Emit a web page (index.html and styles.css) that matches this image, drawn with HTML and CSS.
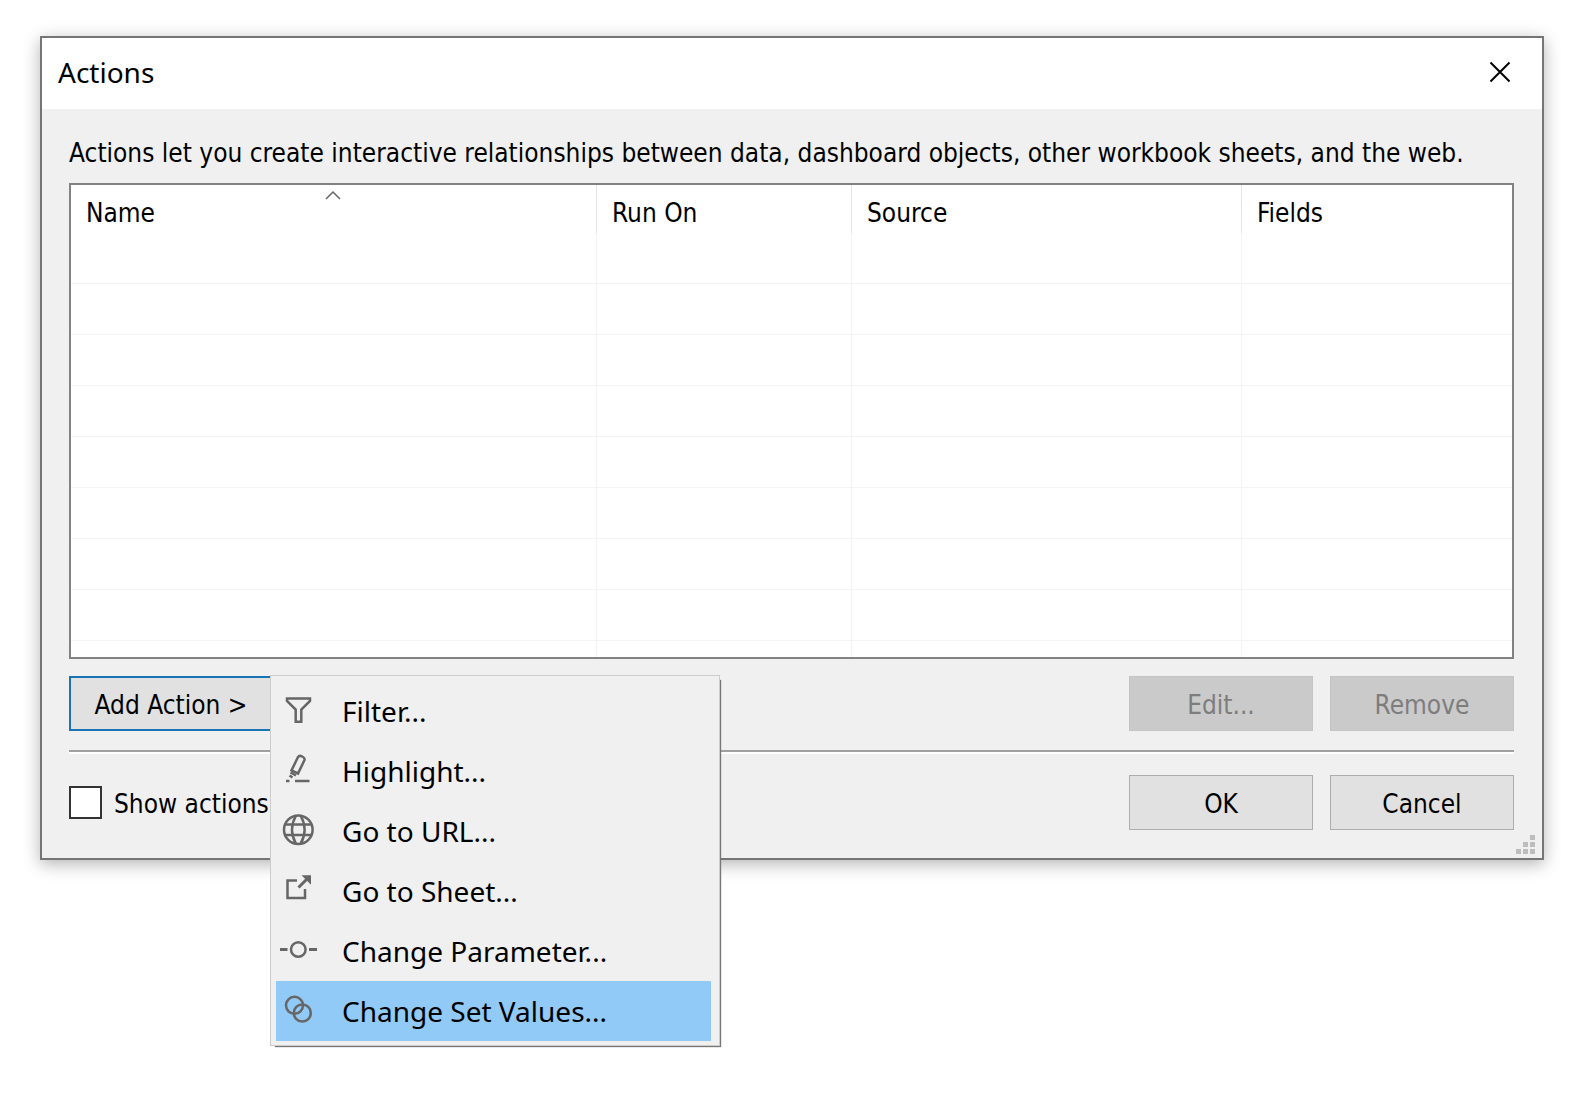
FILE: index.html
```html
<!DOCTYPE html>
<html lang="en">
<head>
    <meta charset="UTF-8">
    <meta name="viewport" content="width=device-width, initial-scale=1.0">
    <title>Actions</title>
    <link rel="stylesheet" href="styles.css">
</head>
<body>
    <div class="dialog" role="dialog" aria-labelledby="dialog-title">
        <div class="title-bar">
            <h1 id="dialog-title">Actions</h1>
            <button class="close-button" aria-label="Close">
                <svg width="22" height="22" viewBox="0 0 22 22"><path d="M1.5 1.5 20.5 20.5M20.5 1.5 1.5 20.5"/></svg>
            </button>
        </div>

        <div class="dialog-body">
            <p class="intro">Actions let you create interactive relationships between data, dashboard objects, other workbook sheets, and the web.</p>

            <table class="action-list">
                <colgroup>
                    <col class="col-name">
                    <col class="col-run">
                    <col class="col-source">
                    <col>
                </colgroup>
                <thead>
                    <tr>
                        <th class="sorted">Name
                            <svg class="sort-icon" width="18" height="10" viewBox="0 0 18 10"><path d="M2 9 9 2l7 7"/></svg>
                        </th>
                        <th>Run On</th>
                        <th>Source</th>
                        <th>Fields</th>
                    </tr>
                </thead>
                <tbody>
                    <tr><td></td><td></td><td></td><td></td></tr>
                    <tr><td></td><td></td><td></td><td></td></tr>
                    <tr><td></td><td></td><td></td><td></td></tr>
                    <tr><td></td><td></td><td></td><td></td></tr>
                    <tr><td></td><td></td><td></td><td></td></tr>
                    <tr><td></td><td></td><td></td><td></td></tr>
                    <tr><td></td><td></td><td></td><td></td></tr>
                    <tr><td></td><td></td><td></td><td></td></tr>
                    <tr class="last-row"><td></td><td></td><td></td><td></td></tr>
                </tbody>
            </table>

            <div class="button-row">
                <div class="add-action">
                    <button class="btn add-button">Add Action &gt;</button>
                    <div class="menu" role="menu">
                        <button class="menu-item" role="menuitem">
                            <svg width="40" height="40" viewBox="0 0 40 40"><path d="M9 7.500h23v2.500l-8.700 8.500v12.200h-5.600V18.500L9 10z"/></svg>
                            Filter...
                        </button>
                        <button class="menu-item" role="menuitem">
                            <svg width="40" height="40" viewBox="0 0 40 40"><path d="M20 6q1-1.500 3-1l2 1q2 1 1.500 3L20 22.500l-6.500-3z"/><path d="M12.500 21.500l5.500 3M11.500 24.500l3 2M8 30h3.500M17 30h14.500"/></svg>
                            Highlight...
                        </button>
                        <button class="menu-item" role="menuitem">
                            <svg width="40" height="40" viewBox="0 0 40 40"><circle cx="20.300" cy="18.700" r="14.300"/><path d="M7 13.500h26.600M7 24h26.600M18 4.500q-8 14.200 0 28.400M22.600 4.500q8 14.200 0 28.400"/></svg>
                            Go to URL...
                        </button>
                        <button class="menu-item" role="menuitem">
                            <svg width="40" height="40" viewBox="0 0 40 40"><path d="M19 9.500H9.500V27h17.500v-9"/><path class="bold" d="M20.500 16.500 29 8"/><path class="solid" d="M23.500 4.300H33v9.500z"/></svg>
                            Go to Sheet...
                        </button>
                        <button class="menu-item" role="menuitem">
                            <svg width="40" height="40" viewBox="0 0 40 40"><circle cx="20.300" cy="18.500" r="7.300"/><path class="bold" d="M2 18.500h7.500M31 18.500h8"/></svg>
                            Change Parameter...
                        </button>
                        <button class="menu-item selected" role="menuitem">
                            <svg width="40" height="40" viewBox="0 0 40 40"><circle cx="16.500" cy="14.300" r="8.500"/><circle cx="24.300" cy="22" r="8.500"/></svg>
                            Change Set Values...
                        </button>
                    </div>
                </div>
                <button class="btn push" disabled>Edit...</button>
                <button class="btn" disabled>Remove</button>
            </div>

            <hr>

            <div class="button-row">
                <input type="checkbox" id="show-actions">
                <label for="show-actions">Show actions</label>
                <button class="btn push">OK</button>
                <button class="btn">Cancel</button>
            </div>
        </div>

        <svg class="resize-grip" width="19" height="19" viewBox="0 0 19 19"><path d="M14 0h5v5h-5zM7 7h5v5H7zM14 7h5v5h-5zM0 14h5v5H0zM7 14h5v5H7zM14 14h5v5h-5z"/></svg>
    </div>
</body>
</html>
```
FILE: styles.css
```css
* {
    box-sizing: border-box;
}
body {
    min-height: 100vh;
    margin: 0;
    padding: 36px 50px 36px 40px;
    background-color: white;
    color: #000;
    font-family: "DejaVu Sans Condensed", "DejaVu Sans", sans-serif;
    font-size: 26px;
    line-height: 32px;
}
button {
    font: inherit;
    color: inherit;
}
svg {
    fill: none;
    stroke: #666;
    stroke-width: 2;
}
.dialog {
    position: relative;
    border: 2px solid #757575;
    background-color: #f0f0f0;
    box-shadow: 0 4px 16px rgba(0,0,0,0.3);
}

/* title bar */
.title-bar {
    display: flex;
    justify-content: space-between;
    align-items: center;
    height: 71px;
    padding: 0 16px 3px;
    background-color: white;
}
h1 {
    margin: 0;
    font-family: "Noto Sans", sans-serif;
    font-size: 28px;
    font-weight: normal;
}
.close-button {
    display: flex;
    padding: 15px;
    border: none;
    background: none;
}
.close-button svg {
    stroke: #000;
}

.dialog-body {
    padding: 28px 28px 28px 27px;
}
.intro {
    margin: 0 0 14px;
    white-space: nowrap;
}

/* list of actions */
.action-list {
    width: 100%;
    table-layout: fixed;
    border: 2px solid #828282;
    border-spacing: 0;
    background-color: white;
}
.col-name {
    width: 526px;
}
.col-run {
    width: 255px;
}
.col-source {
    width: 390px;
}
th {
    position: relative;
    height: 48px;
    padding: 8px 15px 0;
    border-right: 1px solid #e5e5e5;
    font-weight: normal;
    text-align: left;
}
td {
    height: 51px;
    padding: 0;
    border-right: 1px solid #f4f4f4;
    border-bottom: 1px solid #f4f4f4;
}
th:last-child,
td:last-child {
    border-right: none;
}
.last-row td {
    height: 16px;
    border-bottom: none;
}
.sort-icon {
    position: absolute;
    top: 5px;
    left: 50%;
    margin-left: -10px;
    stroke-width: 1.5;
}

/* buttons */
.button-row {
    display: flex;
    align-items: center;
}
.btn {
    width: 184px;
    height: 55px;
    margin-left: 17px;
    padding: 2px 0 0;
    border: 1px solid #adadad;
    background-color: #e1e1e1;
}
.btn:disabled {
    border-color: #c4c4c4;
    background-color: #cacaca;
    color: #7d7d7d;
}
.push {
    margin-left: auto;
}
.action-list + .button-row {
    margin-top: 17px;
}
.add-action {
    position: relative;
}
.add-button {
    width: 202px;
    margin-left: 0;
    border: 2px solid #1a73b5;
    border-right: none;
}
hr {
    height: 4px;
    margin: 19px 0 21px;
    border: none;
    border-top: 2px solid #a0a0a0;
    background-color: white;
}
input[type="checkbox"] {
    appearance: none;
    width: 33px;
    height: 33px;
    margin: 0 12px 0 0;
    border: 2px solid #333;
    background-color: white;
}
label {
    padding-top: 2px;
}
.resize-grip {
    position: absolute;
    right: 7px;
    bottom: 4px;
    fill: #bdbdbd;
    stroke: none;
}

/* drop-down menu */
.menu {
    position: absolute;
    top: -1px;
    left: 201px;
    width: 450px;
    padding: 5px 8px 4px 5px;
    border: 1px solid #ccc;
    background-color: #f0f0f0;
    box-shadow: 3px 3px 1px -2px #777;
}
.menu-item {
    display: flex;
    align-items: center;
    gap: 24px;
    width: 100%;
    height: 60px;
    padding: 0 2px;
    border: none;
    background: none;
    font-family: "Noto Sans", sans-serif;
    font-size: 28px;
    text-align: left;
}
.menu-item.selected {
    background-color: #91c9f7;
}
.menu-item svg {
    stroke-width: 2.5;
}
.menu-item .bold {
    stroke-width: 3;
}
.menu-item .solid {
    fill: #666;
    stroke: none;
}
```
